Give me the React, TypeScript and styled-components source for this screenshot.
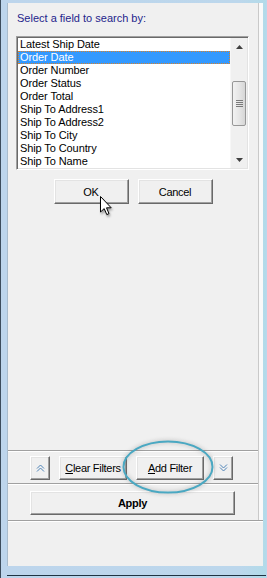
import { FC } from 'react';
import styled, { createGlobalStyle } from 'styled-components';

const GlobalStyle = createGlobalStyle`
  html, body {
    margin: 0;
    padding: 0;
    background: #bcd6ec;
  }
  body {
    font-family: "Liberation Sans", Arial, sans-serif;
    font-size: 11px;
  }
`;

const Frame = styled.div`
  width: 266px;
  height: 578px;
  border-left: 1px solid #3c4c5c;
  background: linear-gradient(to right, #bdd5ec 0%, #bcd7ec 90%, #b2dbe9 100%);
  padding: 3px 0 0 6px;
  box-sizing: border-box;
  display: flex;
  flex-direction: column;
`;

const Panel = styled.div`
  width: 255px;
  height: 563px;
  border-left: 1px solid #a9bccd;
  background: #f0f0f0;
  display: flex;
  flex-direction: column;
`;

const Upper = styled.div`
  display: flex;
  flex: 1;
`;

const Content = styled.div`
  width: 250px;
  border-right: 1px solid #c9c9c9;
  display: flex;
  flex-direction: column;
  position: relative;
`;

const Gutter = styled.div`
  width: 4px;
  background: #f9f9f9;
`;

const Label = styled.div`
  margin: 9px 0 0 9px;
  line-height: 13px;
  color: #1f1f8c;
`;

const ListBox = styled.div`
  margin: 11px 0 0 8px;
  width: 233px;
  height: 134px;
  box-sizing: border-box;
  border: 1px solid;
  border-color: #a0a0a0 #ffffff #ffffff #a0a0a0;
  box-shadow: inset 1px 1px 0 #696969, inset -1px -1px 0 #e3e3e3;
  background: #fff;
  padding: 1px;
  display: flex;
`;

const Items = styled.div`
  flex: 1;
  display: flex;
  flex-direction: column;
`;

const Item = styled.div<{ selected?: boolean }>`
  height: 13px;
  line-height: 13px;
  padding-left: 2px;
  white-space: nowrap;
  letter-spacing: -0.1px;
  color: ${({ selected }) => (selected ? '#fff' : '#000')};
  background: ${({ selected }) => (selected ? '#3399ff' : 'transparent')};
  outline: ${({ selected }) => (selected ? '1px dotted #d9822b' : 'none')};
  outline-offset: -1px;
`;

const ScrollBar = styled.div`
  width: 16px;
  background: #f0f0f0;
  border-left: 1px solid #f7f7f7;
  display: flex;
  flex-direction: column;
  align-items: center;
`;

const Arrow = styled.div`
  height: 17px;
  display: flex;
  align-items: center;
  justify-content: center;
`;

const Track = styled.div`
  flex: 1;
  display: flex;
  flex-direction: column;
`;

const Thumb = styled.div`
  margin-top: 26px;
  width: 14px;
  height: 45px;
  box-sizing: border-box;
  border: 1px solid #979797;
  border-radius: 2px;
  background: linear-gradient(to right, #f2f2f2, #e6e6e6 50%, #d6d6d6);
  display: flex;
  align-items: center;
  justify-content: center;
`;

const DialogButtons = styled.div`
  margin-top: 9px;
  display: flex;
  justify-content: center;
  gap: 9px;
  position: relative;
`;

const Button = styled.button<{ width: number; bold?: boolean }>`
  width: ${({ width }) => width}px;
  height: 24px;
  padding: 0;
  box-sizing: border-box;
  background: #f0f0f0;
  border: 1px solid;
  border-color: #ffffff #696969 #696969 #ffffff;
  box-shadow: inset -1px -1px 0 #a0a0a0, inset 1px 1px 0 #e3e3e3;
  font-family: "Liberation Sans", Arial, sans-serif;
  font-size: 11px;
  letter-spacing: -0.3px;
  font-weight: ${({ bold }) => (bold ? 700 : 400)};
  color: #000;
  display: flex;
  align-items: center;
  justify-content: center;
`;

const TallButton = styled(Button)`
  height: 25px;
`;

const Cursor = styled.svg`
  position: absolute;
  left: 92px;
  top: 17px;
  filter: drop-shadow(1px 2px 1px rgba(0, 0, 0, 0.35));
`;

const Spacer = styled.div`
  flex: 1;
`;

const Divider = styled.div`
  height: 1px;
  background: #a0a0a0;
  border-bottom: 1px solid #ffffff;
`;

const FilterRow = styled.div`
  position: relative;
  padding: 4px 0 3px 22px;
  display: flex;
  gap: 9px;
`;

const Mnemonic = styled.span`
  text-decoration: underline;
`;

const Highlight = styled.svg`
  position: absolute;
  left: 114px;
  top: -12px;
  overflow: visible;
  filter: drop-shadow(0 0 2px rgba(90, 90, 90, 0.45));
`;

const ApplyRow = styled.div`
  padding: 6px 0 5px 22px;
`;

const Lower = styled.div`
  height: 44px;
`;

const BottomEdge = styled.div`
  margin-top: 9px;
  height: 1px;
  background: #1f3443;
`;

const fields = [
  'Latest Ship Date',
  'Order Date',
  'Order Number',
  'Order Status',
  'Order Total',
  'Ship To Address1',
  'Ship To Address2',
  'Ship To City',
  'Ship To Country',
  'Ship To Name',
];

const Chevrons: FC<{ down?: boolean }> = ({ down }) => (
  <svg width="9" height="8" viewBox="0 0 9 8" style={down ? { transform: 'rotate(180deg)' } : undefined}>
    <path d="M1 4.5 L4.5 1 L8 4.5 M1 7.5 L4.5 4 L8 7.5" fill="none" stroke="#4f84b8" strokeWidth="1" />
  </svg>
);

export default function App() {
  return (
    <>
      <GlobalStyle />
      <Frame>
        <Panel>
          <Upper>
            <Content>
              <Label>Select a field to search by:</Label>
              <ListBox>
                <Items>
                  {fields.map((f) => (
                    <Item key={f} selected={f === 'Order Date'}>
                      {f}
                    </Item>
                  ))}
                </Items>
                <ScrollBar>
                  <Arrow>
                    <svg width="7" height="4" viewBox="0 0 7 4">
                      <path d="M0 4 L3.5 0 L7 4 Z" fill="#404040" />
                    </svg>
                  </Arrow>
                  <Track>
                    <Thumb>
                      <svg width="7" height="7" viewBox="0 0 7 7">
                        <path d="M0 0.5 H7 M0 2.5 H7 M0 4.5 H7 M0 6.5 H7" stroke="#7a7a7a" strokeWidth="1" />
                      </svg>
                    </Thumb>
                  </Track>
                  <Arrow>
                    <svg width="7" height="4" viewBox="0 0 7 4">
                      <path d="M0 0 L3.5 4 L7 0 Z" fill="#404040" />
                    </svg>
                  </Arrow>
                </ScrollBar>
              </ListBox>
              <DialogButtons>
                <TallButton width={75}>OK</TallButton>
                <TallButton width={75}>Cancel</TallButton>
                <Cursor width="13" height="20" viewBox="0 0 13 20">
                  <path
                    d="M0.5 0.5 L0.5 16 L4.2 12.6 L6.8 18.6 L9 17.6 L6.5 11.8 L11.2 11.8 Z"
                    fill="#fff"
                    stroke="#000"
                    strokeWidth="1"
                    strokeLinejoin="miter"
                  />
                </Cursor>
              </DialogButtons>
              <Spacer />
              <Divider />
              <FilterRow>
                <Button width={20}>
                  <Chevrons />
                </Button>
                <Button width={68}>
                  <span>
                    <Mnemonic>C</Mnemonic>lear Filters
                  </span>
                </Button>
                <Button width={68}>
                  <span>
                    <Mnemonic>A</Mnemonic>dd Filter
                  </span>
                </Button>
                <Button width={20}>
                  <Chevrons down />
                </Button>
                <Highlight width="92" height="54" viewBox="0 0 92 54">
                  <ellipse cx="46" cy="27" rx="44.5" ry="25.5" fill="none" stroke="#4aa8c2" strokeWidth="2" />
                </Highlight>
              </FilterRow>
              <Divider />
              <ApplyRow>
                <Button width={205} bold>
                  Apply
                </Button>
              </ApplyRow>
            </Content>
            <Gutter />
          </Upper>
          <Divider />
          <Lower />
        </Panel>
        <BottomEdge />
      </Frame>
    </>
  );
}
